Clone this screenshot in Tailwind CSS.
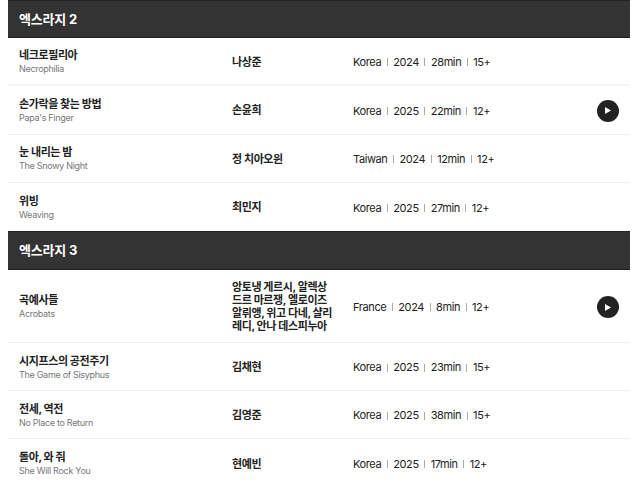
<!DOCTYPE html>
<html lang="ko">
<head>
  <meta charset="UTF-8" />
  <title>엑스라지</title>
  <script src="https://cdn.jsdelivr.net/npm/@tailwindcss/browser@4"></script>
</head>
<body class="bg-white h-[488px] overflow-hidden font-['Inter','Noto_Sans_CJK_KR',sans-serif] text-[#222]">
  <main id="list" class="ml-2 w-[622px]"></main>

  <script>
    // 섹션별 상영작 목록
    const sections = [
      { name: "엑스라지 2", h: "h-[38px]", films: [
        { h: "h-[48px] border-b-2 border-[#f5f5f5]", ko: "네크로필리아", en: "Necrophilia", by: "나상준", meta: ["Korea", "2024", "28min", "15+"] },
        { h: "h-[48.5px] border-b border-[#eee]", ko: "손가락을 찾는 방법", en: "Papa's Finger", by: "손윤희", meta: ["Korea", "2025", "22min", "12+"], play: true },
        { h: "h-[48px] border-b border-[#eee]", ko: "눈 내리는 밤", en: "The Snowy Night", by: "정 치아오윈", meta: ["Taiwan", "2024", "12min", "12+"] },
        { h: "h-[48.5px]", ko: "위빙", en: "Weaving", by: "최민지", meta: ["Korea", "2025", "27min", "12+"] }
      ]},
      { name: "엑스라지 3", h: "h-[39px]", films: [
        { h: "h-[73px] border-b border-[#eee]", ko: "곡예사들", en: "Acrobats", by: "앙토냉 게르시, 알렉상드르 마르쟁, 엘로이즈 알뤼앵, 위고 다네, 샬리 레디, 안나 데스피누아", meta: ["France", "2024", "8min", "12+"], play: true },
        { h: "h-[48px] border-b border-[#eee]", ko: "시지프스의 공전주기", en: "The Game of Sisyphus", by: "김채현", meta: ["Korea", "2025", "23min", "15+"] },
        { h: "h-[48px] border-b border-[#eee]", ko: "전세, 역전", en: "No Place to Return", by: "김영준", meta: ["Korea", "2025", "38min", "15+"] },
        { h: "h-[48px]", ko: "돌아, 와 줘", en: "She Will Rock You", by: "현예빈", meta: ["Korea", "2025", "17min", "12+"] }
      ]}
    ];

    const playBtn = `<span class="w-[22px] h-[22px] rounded-full bg-[#222] flex items-center justify-center"><svg width="6" height="7" viewBox="0 0 6 7"><path d="M0 0 L6 3.5 L0 7 Z" fill="#fff" /></svg></span>`;
    const divider = `<i class="w-px h-[8px] bg-[#aaa]"></i>`;

    document.getElementById("list").innerHTML = sections.map(section => `
      <h2 class="${section.h} flex items-center pl-[11px] pt-px bg-[#333] border-y border-[#222] text-white text-[13px] tracking-[-0.2px] font-bold">${section.name}</h2>
      ${section.films.map(film => `
        <div class="grid grid-cols-[213px_121px_1fr_auto] items-center pt-[2px] pl-[11px] pr-[11px] ${film.h}">
          <div>
            <p class="text-[11px] leading-[14px] tracking-[-0.4px] font-bold">${film.ko}</p>
            <p class="text-[9px] leading-[14px] tracking-[-0.3px] text-[#777]">${film.en}</p>
          </div>
          <p class="w-[100px] break-all text-[11px] leading-[13px] tracking-[-0.4px] font-bold">${film.by}</p>
          <p class="text-[11px] tracking-[-0.4px] flex items-center gap-[5.5px]">${film.meta.map(m => `<span>${m}</span>`).join(divider)}</p>
          ${film.play ? playBtn : `<span class="w-[22px]"></span>`}
        </div>`).join("")}
    `).join("");
  </script>
</body>
</html>
